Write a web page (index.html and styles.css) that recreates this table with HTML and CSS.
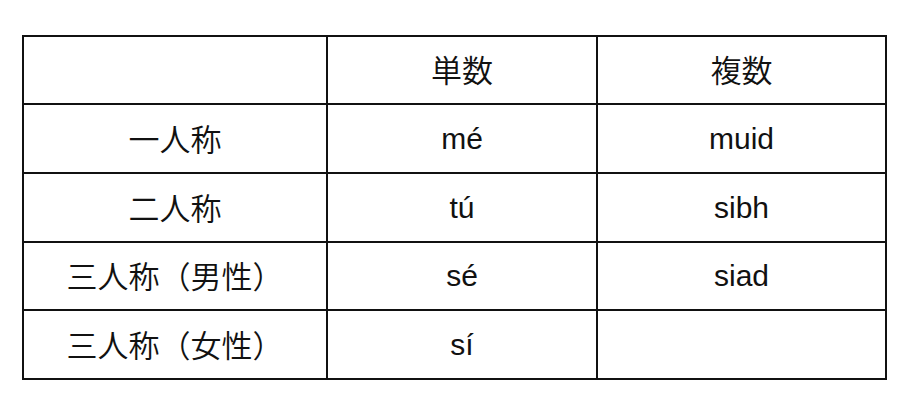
FILE: index.html
```html
<!DOCTYPE html>
<html lang="ja">
<head>
<meta charset="utf-8">
<link rel="stylesheet" href="styles.css">
</head>
<body>
<table class="pron">
  <colgroup>
    <col class="c1"><col class="c2"><col class="c3">
  </colgroup>
  <tr class="r1"><td></td><td class="ja">単数</td><td class="ja">複数</td></tr>
  <tr class="r2"><td class="ja">一人称</td><td>mé</td><td>muid</td></tr>
  <tr class="r3"><td class="ja">二人称</td><td>tú</td><td>sibh</td></tr>
  <tr class="r4"><td class="ja">三人称（男性）</td><td>sé</td><td>siad</td></tr>
  <tr class="r5"><td class="ja">三人称（女性）</td><td>sí</td><td></td></tr>
</table>
</body>
</html>
```
FILE: styles.css
```css
html, body {
  margin: 0;
  padding: 0;
  background: #ffffff;
}
body {
  padding: 35px 0 0 22px;
  font-family: "Liberation Sans", "Noto Sans CJK JP", sans-serif;
  color: #111111;
}
.pron {
  border-collapse: collapse;
  table-layout: fixed;
  width: 863px;
  border: 2px solid #111111;
}
.c1 { width: 304px; }
.c2 { width: 270px; }
.c3 { width: 289px; }
.pron td {
  border: 2px solid #111111;
  text-align: center;
  vertical-align: middle;
  padding: 0;
  font-size: 30px;
  line-height: 1;
}
.pron td.ja {
  font-family: "Noto Sans CJK JP", sans-serif;
  font-size: 31px;
  font-weight: 350;
  padding-bottom: 3px;
}
.r1 { height: 68px; }
.r2 { height: 69px; }
.r3 { height: 69px; }
.r4 { height: 68px; }
.r5 { height: 69px; }
```
